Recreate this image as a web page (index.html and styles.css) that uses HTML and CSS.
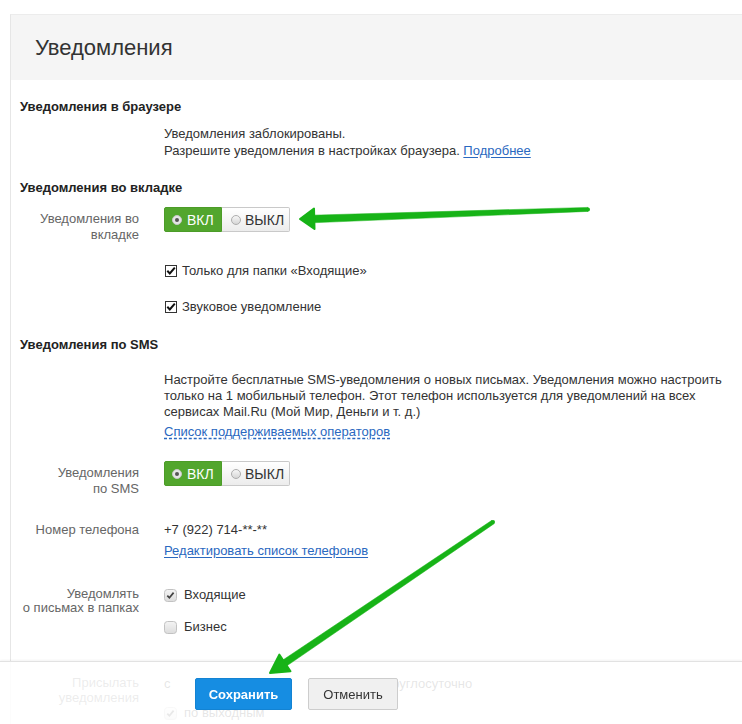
FILE: index.html
```html
<!DOCTYPE html>
<html lang="ru">
<head>
  <meta charset="UTF-8">
  <title>Уведомления</title>
  <link rel="stylesheet" href="styles.css">
</head>
<body>

  <div class="page">
    <div class="card">
      <div class="card-head">
        <h1>Уведомления</h1>
      </div>

      <div class="card-body">
        <h2 class="section-title">Уведомления в браузере</h2>
        <div class="row row-browser">
          <div class="label"></div>
          <div class="field text-17">
            Уведомления заблокированы.<br>
            Разрешите уведомления в настройках браузера. <a class="link" href="#">Подробнее</a>
          </div>
        </div>

        <h2 class="section-title title-tab">Уведомления во вкладке</h2>
        <div class="row row-switch">
          <div class="label label-switch">Уведомления во<br>вкладке</div>
          <div class="field">
            <div class="switch">
              <span class="switch-opt is-on"><i class="radio"></i>ВКЛ</span>
              <span class="switch-opt"><i class="radio"></i>ВЫКЛ</span>
            </div>
          </div>
        </div>
        <div class="row row-check1">
          <div class="label"></div>
          <div class="field">
            <label class="check-item">
              <svg class="check" width="12" height="12" viewBox="0 0 12 12"><rect x="0.5" y="0.5" width="11" height="11" fill="#fff" stroke="#333"/><path d="M2.3 5.8 L4.8 8.4 L9.8 2.6" fill="none" stroke="#111" stroke-width="2"/></svg>
              Только для папки «Входящие»
            </label>
          </div>
        </div>
        <div class="row row-check2">
          <div class="label"></div>
          <div class="field">
            <label class="check-item">
              <svg class="check" width="12" height="12" viewBox="0 0 12 12"><rect x="0.5" y="0.5" width="11" height="11" fill="#fff" stroke="#333"/><path d="M2.3 5.8 L4.8 8.4 L9.8 2.6" fill="none" stroke="#111" stroke-width="2"/></svg>
              Звуковое уведомление
            </label>
          </div>
        </div>

        <h2 class="section-title title-sms">Уведомления по SMS</h2>
        <div class="row row-sms-info">
          <div class="label"></div>
          <div class="field">
            <p class="note">Настройте бесплатные SMS-уведомления о новых письмах. Уведомления можно настроить только на 1 мобильный телефон. Этот телефон используется для уведомлений на всех сервисах Mail.Ru (Мой Мир, Деньги и т. д.)</p>
            <a class="link link-dashed" href="#">Список поддерживаемых операторов</a>
          </div>
        </div>
        <div class="row row-switch2">
          <div class="label label-switch">Уведомления<br>по SMS</div>
          <div class="field">
            <div class="switch">
              <span class="switch-opt is-on"><i class="radio"></i>ВКЛ</span>
              <span class="switch-opt"><i class="radio"></i>ВЫКЛ</span>
            </div>
          </div>
        </div>
        <div class="row row-phone">
          <div class="label">Номер телефона</div>
          <div class="field">
            <div>+7 (922) 714-**-**</div>
            <a class="link link-phones" href="#">Редактировать список телефонов</a>
          </div>
        </div>
        <div class="row row-folders">
          <div class="label label-tight">Уведомлять<br>о письмах в папках</div>
          <div class="field">
            <label class="check-item soft">
              <svg class="check" width="13" height="13" viewBox="0 0 13 13"><rect x="0.5" y="0.5" width="12" height="12" rx="3" fill="url(#soft)" stroke="#c2c2c2"/><path d="M3.3 6.6 L5.4 8.8 L9.6 3.6" fill="none" stroke="#444" stroke-width="1.7"/></svg>
              Входящие
            </label>
            <label class="check-item soft item-next">
              <svg class="check" width="13" height="13" viewBox="0 0 13 13"><rect x="0.5" y="0.5" width="12" height="12" rx="3" fill="url(#soft)" stroke="#c2c2c2"/></svg>
              Бизнес
            </label>
          </div>
        </div>
        <div class="row row-schedule">
          <div class="label label-schedule">Присылать<br>уведомления</div>
          <div class="field">
            <div class="schedule">
              <span>с</span>
              <label class="check-item soft round-clock">
                <svg class="check" width="13" height="13" viewBox="0 0 13 13"><rect x="0.5" y="0.5" width="12" height="12" rx="3" fill="url(#soft)" stroke="#c2c2c2"/></svg>
                круглосуточно
              </label>
            </div>
            <label class="check-item soft item-weekend">
              <svg class="check" width="13" height="13" viewBox="0 0 13 13"><rect x="0.5" y="0.5" width="12" height="12" rx="3" fill="url(#soft)" stroke="#c2c2c2"/><path d="M3.3 6.6 L5.4 8.8 L9.6 3.6" fill="none" stroke="#444" stroke-width="1.7"/></svg>
              по выходным
            </label>
          </div>
        </div>
      </div>
    </div>

    <div class="footer">
      <button class="btn btn-primary">Сохранить</button>
      <button class="btn btn-default">Отменить</button>
    </div>

    <!-- annotation arrows drawn over the page -->
    <svg class="arrows" width="742" height="724" viewBox="0 0 742 724">
      <defs>
        <linearGradient id="soft" x1="0" y1="0" x2="0" y2="1">
          <stop offset="0" stop-color="#f4f4f4"/>
          <stop offset="1" stop-color="#dcdcdc"/>
        </linearGradient>
      </defs>
      <g fill="#17b317" stroke="#17b317" stroke-linejoin="round">
        <polygon points="312,215.2 588,207.4 588,211.4 312,222.8" stroke-width="0.5"/>
        <circle cx="588" cy="209.4" r="2" stroke="none"/>
        <polygon points="300,219 314,208.5 314.5,229" stroke-width="2"/>

        <polygon points="282.9,660 491.9,520.3 494.1,523.7 286.9,665.8" stroke-width="0.5"/>
        <circle cx="493" cy="522" r="2" stroke="none"/>
        <polygon points="270,673 279.3,654.6 290.5,671.2" stroke-width="2"/>
      </g>
    </svg>
  </div>

</body>
</html>
```

FILE: styles.css
```css
* {
  box-sizing: border-box;
}

html, body {
  margin: 0;
  height: 100%;
  overflow: hidden;
}

body {
  font-family: "Liberation Sans", Arial, sans-serif;
  font-size: 13px;
  line-height: 16px;
  color: #333;
  background: #fff;
}

.page {
  position: relative;
  height: 100%;
  padding: 14px 0 0 10px;
}

.card {
  height: 100%;
  border-left: 1px solid #e6e6e6;
  border-top: 1px solid #ececec;
}

.card-head {
  height: 65px;
  padding-left: 24px;
  background: #f5f5f5;
}

.card-head h1 {
  margin: 0;
  font-size: 22px;
  font-weight: normal;
  line-height: 65px;
  color: #333;
}

.card-body {
  padding: 19px 0 0 9px;
}

.section-title {
  margin: 0;
  font-size: 13px;
  font-weight: bold;
  line-height: 16px;
  color: #222;
}

.title-tab { margin-top: 21px; }
.title-sms { margin-top: 22px; }

.row {
  display: grid;
  grid-template-columns: 119px 1fr;
  column-gap: 25px;
}

.label {
  text-align: right;
  color: #666;
}

.label-switch { padding-top: 4px; }
.label-tight { line-height: 14px; }
.label-schedule { line-height: 15px; }

.text-17 { line-height: 17px; }

.row-browser { margin-top: 10px; }
.row-switch { margin-top: 11px; }
.row-check1 { margin-top: 20px; }
.row-check2 { margin-top: 20px; }
.row-sms-info { margin-top: 19px; }
.row-switch2 { margin-top: 21px; }
.row-phone { margin-top: 25px; }
.row-folders { margin-top: 28px; }
.row-schedule { margin-top: 40px; }

.note {
  margin: 0;
}

.link {
  color: #2a68c0;
  text-decoration: underline;
  text-underline-offset: 2px;
}

.link-dashed {
  display: inline-block;
  margin-top: 4px;
  text-decoration-style: dashed;
}

.link-phones {
  display: inline-block;
  margin-top: 5px;
}

/* on / off switch */
.switch {
  display: inline-flex;
  height: 25px;
  font-size: 14px;
}

.switch-opt {
  display: flex;
  align-items: center;
  gap: 4px;
  padding-left: 9px;
  border: 1px solid #c9c9c9;
  border-left: 0;
  border-radius: 0 2px 2px 0;
  background: linear-gradient(#fff, #ececec);
  color: #333;
  width: 68px;
}

.switch-opt.is-on {
  width: 58px;
  padding-left: 7px;
  gap: 5px;
  border: 1px solid #4c9c28;
  border-radius: 2px 0 0 2px;
  background: #52a62d;
  color: #fff;
}

.radio {
  position: relative;
  width: 10px;
  height: 10px;
  border-radius: 50%;
  border: 1px solid #adadad;
  background: linear-gradient(#f6f6f6, #d6d6d6);
}

.is-on .radio {
  border-color: #c8c8c8;
  background: #e6e6e6;
}

.is-on .radio::after {
  content: "";
  position: absolute;
  left: 2px;
  top: 2px;
  width: 4px;
  height: 4px;
  border-radius: 50%;
  background: #555;
}

/* checkboxes */
.check-item {
  display: flex;
  align-items: center;
  gap: 5px;
  padding-left: 1px;
}

.check-item.soft {
  gap: 7px;
  padding-left: 0;
}

.item-next { margin-top: 16px; }
.item-weekend { margin-top: 13px; }

.check {
  flex: none;
}

.schedule {
  display: flex;
  align-items: center;
  margin-top: 1px;
}

.round-clock {
  margin-left: 196px;
}

/* fixed bottom bar */
.footer {
  position: fixed;
  left: 0;
  right: 0;
  bottom: 0;
  height: 63px;
  z-index: 5;
  display: flex;
  align-items: flex-start;
  gap: 16px;
  padding: 16px 0 0 195px;
  background: rgba(255, 255, 255, 0.88);
  border-top: 1px solid #e2e2e2;
  box-shadow: 0 -1px 2px rgba(0, 0, 0, 0.05);
}

.btn {
  height: 32px;
  padding: 0;
  font-family: inherit;
  font-size: 13px;
  border-radius: 2px;
  cursor: pointer;
}

.btn-primary {
  width: 97px;
  font-weight: bold;
  color: #fff;
  background: #168de2;
  border: 1px solid #1383d3;
}

.btn-default {
  width: 90px;
  color: #333;
  background: #f0f0f0;
  border: 1px solid #cdcdcd;
}

.arrows {
  position: absolute;
  left: 0;
  top: 0;
  z-index: 10;
  pointer-events: none;
}
```
